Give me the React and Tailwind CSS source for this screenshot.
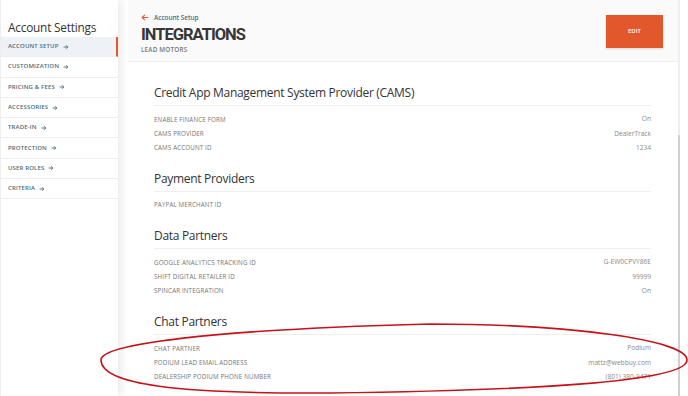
import React from 'react';

const navItems = [
  'Account Setup',
  'Customization',
  'Pricing & Fees',
  'Accessories',
  'Trade-In',
  'Protection',
  'User Roles',
  'Criteria',
];

const sections = [
  {
    title: 'Credit App Management System Provider (CAMS)',
    rows: [
      ['Enable Finance Form', 'On'],
      ['CAMS Provider', 'DealerTrack'],
      ['CAMS Account ID', '1234'],
    ],
  },
  {
    title: 'Payment Providers',
    rows: [['PayPal Merchant ID', '']],
  },
  {
    title: 'Data Partners',
    rows: [
      ['Google Analytics Tracking ID', 'G-EW0CPVY86E'],
      ['Shift Digital Retailer ID', '99999'],
      ['SpinCar Integration', 'On'],
    ],
  },
  {
    title: 'Chat Partners',
    rows: [
      ['Chat Partner', 'Podium'],
      ['Podium Lead Email Address', 'mattz@webbuy.com'],
      ['Dealership Podium Phone Number', '(801) 380-9471'],
    ],
  },
];

function ArrowRight() {
  return (
    <svg width="6" height="6" viewBox="0 0 10 10" className="ml-[4px]">
      <path d="M1 5h7M5 2l3 3-3 3" fill="none" stroke="currentColor" strokeWidth="1.5" />
    </svg>
  );
}

function Sidebar() {
  return (
    <aside className="w-[118px] shrink-0 h-full bg-white border-l border-[#eee] relative z-10 shadow-[3px_0_9px_rgba(0,0,0,0.09)]">
      <h2 className="pt-[19px] pl-[7px] text-[11.8px] leading-[17px] text-[#333] font-['Open_Sans'] tracking-[-0.2px]">
        Account Settings
      </h2>
      <nav className="mt-[1px]">
        {navItems.map((item, i) => (
          <div
            key={item}
            className={`h-[20.3px] flex items-center pl-[7px] border-b border-[#eeeeee] text-[6px] font-semibold uppercase tracking-[0.15px] text-[#4f6b78] font-['Open_Sans'] ${
              i === 0 ? 'bg-[#eef1f6] border-r-2 border-r-[#e5582b]' : ''
            }`}
          >
            {item}
            <ArrowRight />
          </div>
        ))}
      </nav>
    </aside>
  );
}

function Section({ title, rows }) {
  return (
    <section className="mb-[16px]">
      <h3 className="text-[12px] leading-[16px] text-[#333] font-['Open_Sans'] tracking-[-0.3px] pb-[4px] border-b border-[#eeeeee]">
        {title}
      </h3>
      <div className="pt-[6px]">
        {rows.map(([label, value]) => (
          <div key={label} className="h-[14.3px] flex items-center justify-between">
            <span className="text-[6.2px] uppercase tracking-[0.15px] text-[#747474] font-['Open_Sans']">
              {label}
            </span>
            <span className="text-[6.6px] text-[#8a8a8a] font-['Open_Sans']">{value}</span>
          </div>
        ))}
      </div>
    </section>
  );
}

export default function App() {
  return (
    <div className="relative w-[688px] h-[396px] overflow-hidden bg-white flex">
      <Sidebar />
      <div className="w-[10px] shrink-0" />
      <main className="w-[550px] shrink-0 h-full bg-white">
        <header className="h-[62px] bg-[#fafafa] border-b border-[#eeeeee] flex justify-between pl-[13px] pr-[15px]">
          <div className="pt-[13px]">
            <div className="flex items-center text-[6.4px] text-[#4f6b78] font-['Open_Sans'] font-semibold">
              <svg width="8" height="7" viewBox="0 0 10 9" className="mr-[5px]">
                <path d="M9 4.5H1.5M4.8 1L1.3 4.5 4.8 8" fill="none" stroke="#e5582b" strokeWidth="1.4" />
              </svg>
              Account Setup
            </div>
            <h1 className="mt-[3px] text-[16.5px] leading-[17px] font-bold text-[#363636] font-['Roboto'] tracking-[-1px]">
              INTEGRATIONS
            </h1>
            <div className="mt-[2px] text-[6.3px] font-semibold text-[#777] font-['Open_Sans'] tracking-[0.2px]">
              LEAD MOTORS
            </div>
          </div>
          <button className="mt-[15px] w-[57px] h-[33px] bg-[#e2572b] text-white text-[6px] font-semibold font-['Open_Sans'] shadow-[0_1px_2px_rgba(0,0,0,0.15)]">
            EDIT
          </button>
        </header>
        <div className="pl-[26px] pr-[27px] pt-[23px]">
          {sections.map((s) => (
            <Section key={s.title} {...s} />
          ))}
        </div>
      </main>
      <div className="w-[2px] shrink-0 h-full flex flex-col">
        <div className="h-[135px] bg-[#eeeeee]" />
        <div className="flex-1 bg-[#cfcfcf]" />
      </div>
      <div className="flex-1 bg-white" />
      <svg className="absolute left-0 top-0 z-20 pointer-events-none" width="688" height="396">
        <path
          d="M101 360 C 101 345, 200 330, 430 324 C 570 324, 687 340, 687 360 C 687 380, 560 390, 330 393 C 180 394, 101 385, 101 360 Z"
          fill="none"
          stroke="#c4131b"
          strokeWidth="1.6"
        />
      </svg>
    </div>
  );
}
